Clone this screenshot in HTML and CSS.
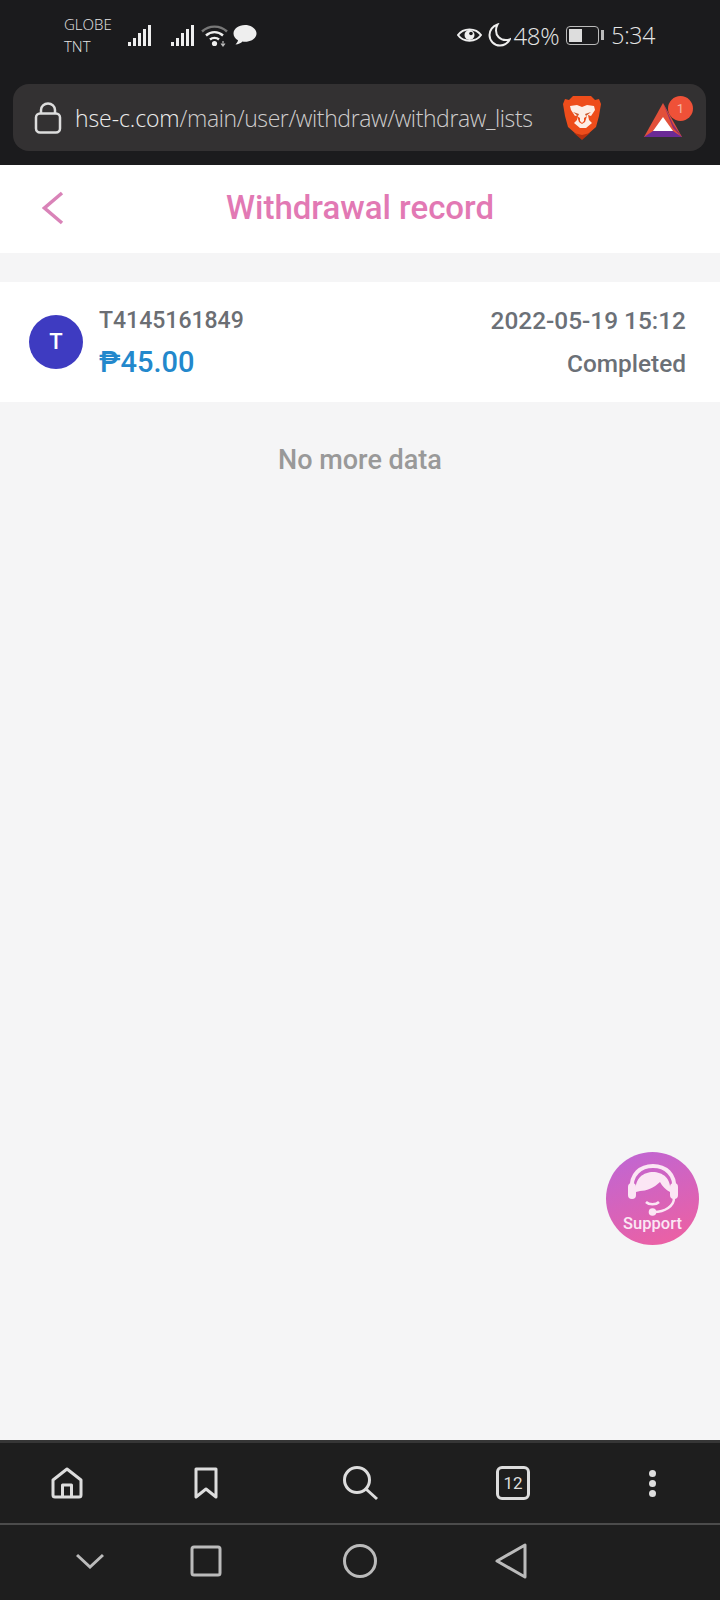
FILE: index.html
```html
<!DOCTYPE html>
<html lang="en">
<head>
    <meta charset="UTF-8">
    <meta name="viewport" content="width=device-width, initial-scale=1.0">
    <title>Withdrawal record</title>
    <link rel="stylesheet" href="styles.css">
</head>
<body>
    <div class="phone">
        <!-- status bar -->
        <div class="statusbar">
            <div class="carrier">
                <span>GLOBE</span>
                <span>TNT</span>
            </div>
            <svg class="signal" width="24" height="23" viewBox="0 0 24 23">
                <rect x="0" y="18" width="3" height="4" fill="#eee"/>
                <rect x="5" y="14" width="3" height="8" fill="#eee"/>
                <rect x="10" y="9" width="3" height="13" fill="#eee"/>
                <rect x="15" y="5" width="3" height="17" fill="#eee"/>
                <rect x="20" y="1" width="3" height="21" fill="#eee"/>
            </svg>
            <svg class="signal signal-2" width="24" height="23" viewBox="0 0 24 23">
                <rect x="0" y="18" width="3" height="4" fill="#eee"/>
                <rect x="5" y="14" width="3" height="8" fill="#eee"/>
                <rect x="10" y="9" width="3" height="13" fill="#eee"/>
                <rect x="15" y="5" width="3" height="17" fill="#eee"/>
                <rect x="20" y="1" width="3" height="21" fill="#eee"/>
            </svg>
            <svg class="wifi" width="27" height="23" viewBox="0 0 27 23" fill="none">
                <path d="M1 7.500C8 1 19 1 26 7.500" stroke="#777" stroke-width="2.400"/>
                <path d="M5 11.500C10 7 17 7 22 11.500" stroke="#eee" stroke-width="2.400"/>
                <path d="M9 15.500C11.500 13.300 15.500 13.300 18 15.500" stroke="#eee" stroke-width="2.400"/>
                <circle cx="13.500" cy="19.500" r="2.600" fill="#eee"/>
                <path d="M22 17v4M20 19.500l2 2.500 2-2.500" stroke="#bbb" stroke-width="1.200"/>
            </svg>
            <svg class="bubble" width="24" height="22" viewBox="0 0 24 22">
                <path d="M12 1C5.500 1 .5 4.800 .5 9.500c0 2.800 1.700 5.200 4.500 6.800-.3 1.700-1.300 3.200-2.500 4.200 2.800-.2 5.300-1.300 7-3 .8.100 1.600.2 2.500.2 6.500 0 11.500-3.700 11.500-8.200S18.500 1 12 1z" fill="#eee"/>
            </svg>
            <div class="status-right">
                <svg width="25" height="18" viewBox="0 0 25 18" fill="none">
                    <path d="M1 9C6 1.500 19 1.500 24 9 19 16.500 6 16.500 1 9z" stroke="#eee" stroke-width="2"/>
                    <circle cx="12.500" cy="9" r="5" fill="#eee"/>
                    <circle cx="14" cy="7.500" r="1.800" fill="#1b1b1d"/>
                </svg>
                <svg class="moon" width="23" height="24" viewBox="0 0 23 24" fill="none">
                    <path d="M9.500 1.500C4.500 3 1.500 7.500 1.500 12c0 5.800 4.700 10.500 10.500 10.500 4.300 0 8-2.500 9.800-6.200-1.200.5-2.600.8-4 .8C12 17.100 8 12.800 8 7.500c0-2.200.5-4.200 1.500-6z" stroke="#eee" stroke-width="2"/>
                </svg>
                <span class="percent">48%</span>
                <div class="battery">
                    <div class="battery-level"></div>
                </div>
                <div class="battery-tip"></div>
                <span class="clock">5:34</span>
            </div>
        </div>

        <!-- browser address bar -->
        <div class="browser-top">
            <div class="urlbar">
                <svg class="lock" width="28" height="32" viewBox="0 0 28 32" fill="none">
                    <rect x="2" y="11.500" width="24" height="19" rx="4" stroke="#ddd" stroke-width="2.500"/>
                    <path d="M7 11.500V8a7 6.500 0 0 1 14 0v3.500" stroke="#ddd" stroke-width="2.500"/>
                </svg>
                <div class="url"><span class="url-host">hse-c.com</span>/main/user/withdraw/withdraw_lists</div>
                <svg class="brave" width="38" height="45" viewBox="0 0 38 45">
                    <path d="M10 1h18l4 4 4-1 2 5-2 12-3 11-8 7-6 5-6-5-8-7-3-11L0 9l2-5 4 1z" fill="#ee4d1b"/>
                    <path d="M7 11l7-1 5 2 5-2 7 1 1 4-4 6-3-1 1 5 3 3-6 5h-6l-6-5 3-3 1-5-3 1-4-6z" fill="#fdeee6"/>
                    <path d="M10 17l6 2-1 2zM28 17l-6 2 1 2z" fill="#c9562a"/>
                    <path d="M14 21l3 2v3l2 2 2-2v-3l3-2-2 6-3 2-3-2z" fill="#ee4d1b"/>
                    <path d="M19 45l-8-7 8 2 8-2z" fill="#b8300e"/>
                </svg>
                <div class="bat">
                    <svg width="40" height="36" viewBox="0 0 40 36">
                        <path d="M20 1L1 35h38z" fill="#e2503a"/>
                        <path d="M20 1L30 22 39 35 30 26z" fill="#8c2b6e"/>
                        <path d="M20 15L10 29h20z" fill="#fff"/>
                        <path d="M10 29h20l9 6H1z" fill="#6a2a96"/>
                    </svg>
                    <span class="bat-badge">1</span>
                </div>
            </div>
        </div>

        <!-- page -->
        <div class="content">
            <div class="page-head">
                <svg class="back" width="22" height="34" viewBox="0 0 22 34" fill="none">
                    <path d="M20 2L2.500 17 20 32" stroke="#d983b8" stroke-width="3.500"/>
                </svg>
                <h1>Withdrawal record</h1>
            </div>

            <div class="record">
                <div class="avatar">T</div>
                <div class="record-main">
                    <div class="order-no">T4145161849</div>
                    <div class="amount">₱45.00</div>
                </div>
                <div class="record-side">
                    <div class="date">2022-05-19 15:12</div>
                    <div class="state">Completed</div>
                </div>
            </div>

            <p class="no-more">No more data</p>

            <div class="support">
                <svg width="58" height="58" viewBox="0 0 58 58" fill="none">
                    <path d="M8 30C6 14 17 6 29 6s23 8 21 24" stroke="#fbe6f4" stroke-width="4"/>
                    <path d="M12 32C10 18 20 12 29 12s19 6 17 20c-4-2-8-6-10-10-6 6-14 9-20 9z" fill="#fbe6f4"/>
                    <path d="M22 42c3 3 10 3 13 0" stroke="#fbe6f4" stroke-width="2.500"/>
                    <rect x="4" y="23" width="8" height="16" rx="4" fill="#fbe6f4"/>
                    <rect x="46" y="23" width="8" height="16" rx="4" fill="#fbe6f4"/>
                    <path d="M50 38c0 8-9 14-20 14" stroke="#fbe6f4" stroke-width="2.500"/>
                    <circle cx="28.500" cy="52" r="3.800" fill="#fbe6f4"/>
                </svg>
                <span class="support-label">Support</span>
            </div>
        </div>

        <!-- browser toolbar -->
        <div class="toolbar">
            <div class="tool">
                <svg width="32" height="32" viewBox="0 0 32 32" fill="none" stroke="#ddd" stroke-width="3" stroke-linejoin="round">
                    <path d="M2 13L16 2l14 11v15a2 2 0 0 1-2 2H4a2 2 0 0 1-2-2z"/>
                    <path d="M11.500 30V18h9v12"/>
                </svg>
            </div>
            <div class="tool">
                <svg width="24" height="32" viewBox="0 0 24 32" fill="none" stroke="#ddd" stroke-width="3" stroke-linejoin="round">
                    <path d="M2 2h20v28l-10-8-10 8z"/>
                </svg>
            </div>
            <div class="tool">
                <svg width="36" height="36" viewBox="0 0 36 36" fill="none" stroke="#ddd" stroke-width="3">
                    <circle cx="15" cy="15" r="12.500"/>
                    <path d="M24 24l11 10"/>
                </svg>
            </div>
            <div class="tool">
                <div class="tabs-count">12</div>
            </div>
            <div class="tool">
                <div class="dots">
                    <span></span>
                    <span></span>
                    <span></span>
                </div>
            </div>
        </div>

        <!-- android nav bar -->
        <div class="navkeys">
            <div class="key">
                <svg width="28" height="16" viewBox="0 0 28 16" fill="none" stroke="#bbb" stroke-width="3">
                    <path d="M1 2l13 12L27 2"/>
                </svg>
            </div>
            <div class="key">
                <svg width="32" height="32" viewBox="0 0 32 32" fill="none" stroke="#bbb" stroke-width="3">
                    <rect x="2" y="2" width="28" height="28" rx="2"/>
                </svg>
            </div>
            <div class="key">
                <svg width="34" height="34" viewBox="0 0 34 34" fill="none" stroke="#bbb" stroke-width="3">
                    <circle cx="17" cy="17" r="15.500"/>
                </svg>
            </div>
            <div class="key">
                <svg width="32" height="36" viewBox="0 0 32 36" fill="none" stroke="#bbb" stroke-width="3" stroke-linejoin="round">
                    <path d="M2 18L30 2v32z"/>
                </svg>
            </div>
        </div>
    </div>
</body>
</html>
```

FILE: styles.css
```css
* {
    box-sizing: border-box;
}
body {
    margin: 0;
    padding: 0;
    font-family: Roboto, "Liberation Sans", sans-serif;
    background-color: #f5f5f6;
}
svg {
    display: block;
}
.phone {
    width: 720px;
    height: 1600px;
    display: flex;
    flex-direction: column;
    overflow: hidden;
}

/* status bar */
.statusbar {
    height: 84px;
    flex-shrink: 0;
    display: flex;
    align-items: flex-start;
    padding: 13px 65px 0 64px;
    background-color: #1b1b1d;
    color: #e6e6e6;
    font-family: "Open Sans", sans-serif;
}
.carrier {
    display: flex;
    flex-direction: column;
    font-size: 15px;
    font-weight: 300;
    line-height: 22px;
    width: 64px;
}
.signal {
    margin-top: 11px;
}
.signal-2 {
    margin-left: 19px;
}
.wifi {
    margin: 11px 0 0 6px;
}
.bubble {
    margin: 11px 0 0 5px;
}
.status-right {
    margin-left: auto;
    display: flex;
    align-items: center;
    height: 44px;
    font-weight: 300;
    font-size: 23px;
    letter-spacing: -0.3px;
}
.moon {
    margin-left: 6px;
}
.percent {
    margin-left: 2px;
    font-size: 24px;
}
.battery {
    width: 33px;
    height: 19px;
    margin-left: 7px;
    padding: 2px;
    border: 1.5px solid #bbb;
    border-radius: 4px;
}
.battery-level {
    width: 48%;
    height: 100%;
    background-color: #ddd;
}
.battery-tip {
    width: 3px;
    height: 10px;
    margin: 0 7px 0 2px;
    background-color: #bbb;
}

/* address bar */
.browser-top {
    height: 81px;
    flex-shrink: 0;
    padding: 0 14px 14px 13px;
    background-color: #1b1b1d;
}
.urlbar {
    height: 67px;
    display: flex;
    align-items: center;
    padding-left: 21px;
    border-radius: 16px;
    background-color: #333132;
}
.lock {
    flex-shrink: 0;
}
.url {
    margin-left: 13px;
    width: 476px;
    font-family: "Open Sans", sans-serif;
    font-size: 23px;
    font-weight: 300;
    letter-spacing: -0.4px;
    color: #cfcdcd;
    white-space: nowrap;
}
.url-host {
    color: #ececec;
    letter-spacing: -0.1px;
}
.brave {
    margin-left: 12px;
}
.bat {
    position: relative;
    margin-left: 42px;
    margin-top: 4px;
}
.bat-badge {
    position: absolute;
    top: -6px;
    right: -10px;
    width: 25px;
    height: 25px;
    border-radius: 50%;
    background-color: #ef5138;
    color: #f6b7a6;
    font-size: 13px;
    line-height: 25px;
    text-align: center;
}

/* page content */
.content {
    position: relative;
    flex: 1;
    background-color: #f5f5f6;
}
.page-head {
    position: relative;
    height: 88px;
    display: flex;
    align-items: center;
    justify-content: center;
    padding-bottom: 4px;
    background-color: #fff;
}
.page-head h1 {
    margin: 0;
    font-size: 33px;
    font-weight: 500;
    color: #e279b4;
}
.back {
    position: absolute;
    left: 42px;
    top: 26px;
}
.record {
    height: 120px;
    margin-top: 29px;
    display: flex;
    align-items: center;
    padding: 0 34px 0 29px;
    background-color: #fff;
}
.avatar {
    width: 54px;
    height: 54px;
    flex-shrink: 0;
    border-radius: 50%;
    background-color: #3e3bc1;
    color: #fff;
    font-size: 22px;
    font-weight: 500;
    line-height: 54px;
    text-align: center;
}
.record-main {
    margin-left: 16px;
}
.order-no {
    font-size: 23px;
    line-height: 30px;
    font-weight: 500;
    color: #6b6e73;
}
.amount {
    margin-top: 9px;
    font-size: 29px;
    line-height: 34px;
    font-weight: 500;
    color: #2388cc;
}
.record-side {
    margin-left: auto;
    text-align: right;
    font-weight: 500;
    color: #6b7077;
}
.date {
    font-size: 24.400px;
    line-height: 30px;
}
.state {
    margin-top: 13px;
    font-size: 24.400px;
    line-height: 30px;
}
.no-more {
    margin: 41px 0 0;
    text-align: center;
    font-size: 27px;
    line-height: 34px;
    font-weight: 500;
    color: #999;
}
.support {
    position: absolute;
    left: 606px;
    top: 987px;
    width: 93px;
    height: 93px;
    border-radius: 50%;
    display: flex;
    flex-direction: column;
    align-items: center;
    padding-top: 8px;
    background: linear-gradient(160deg, #bd66d6, #f0609f);
}
.support-label {
    margin-top: -4px;
    font-size: 16.500px;
    font-weight: 500;
    color: #fbe6f4;
}

/* browser toolbar */
.toolbar {
    height: 85px;
    flex-shrink: 0;
    display: grid;
    grid-template-columns: 134px 144px 164px 142px 136px;
    border-top: 3px solid #363636;
    border-bottom: 2px solid #4c4c4c;
    background-color: #1e1e1e;
    box-shadow: 0 -2px 3px rgba(0, 0, 0, 0.15);
}
.tool, .key {
    display: flex;
    align-items: center;
    justify-content: center;
}
.tabs-count {
    width: 34px;
    height: 34px;
    border: 3px solid #ddd;
    border-radius: 6px;
    color: #ddd;
    font-size: 17px;
    line-height: 28px;
    text-align: center;
}
.dots {
    display: flex;
    flex-direction: column;
    gap: 3px;
}
.dots span {
    width: 7px;
    height: 7px;
    border-radius: 50%;
    background-color: #ddd;
}

/* android keys */
.navkeys {
    flex: 0 0 75px;
    display: grid;
    grid-template-columns: 180px 52px 256px 46px;
    padding-bottom: 3px;
    background-color: #1e1e1e;
}
```
